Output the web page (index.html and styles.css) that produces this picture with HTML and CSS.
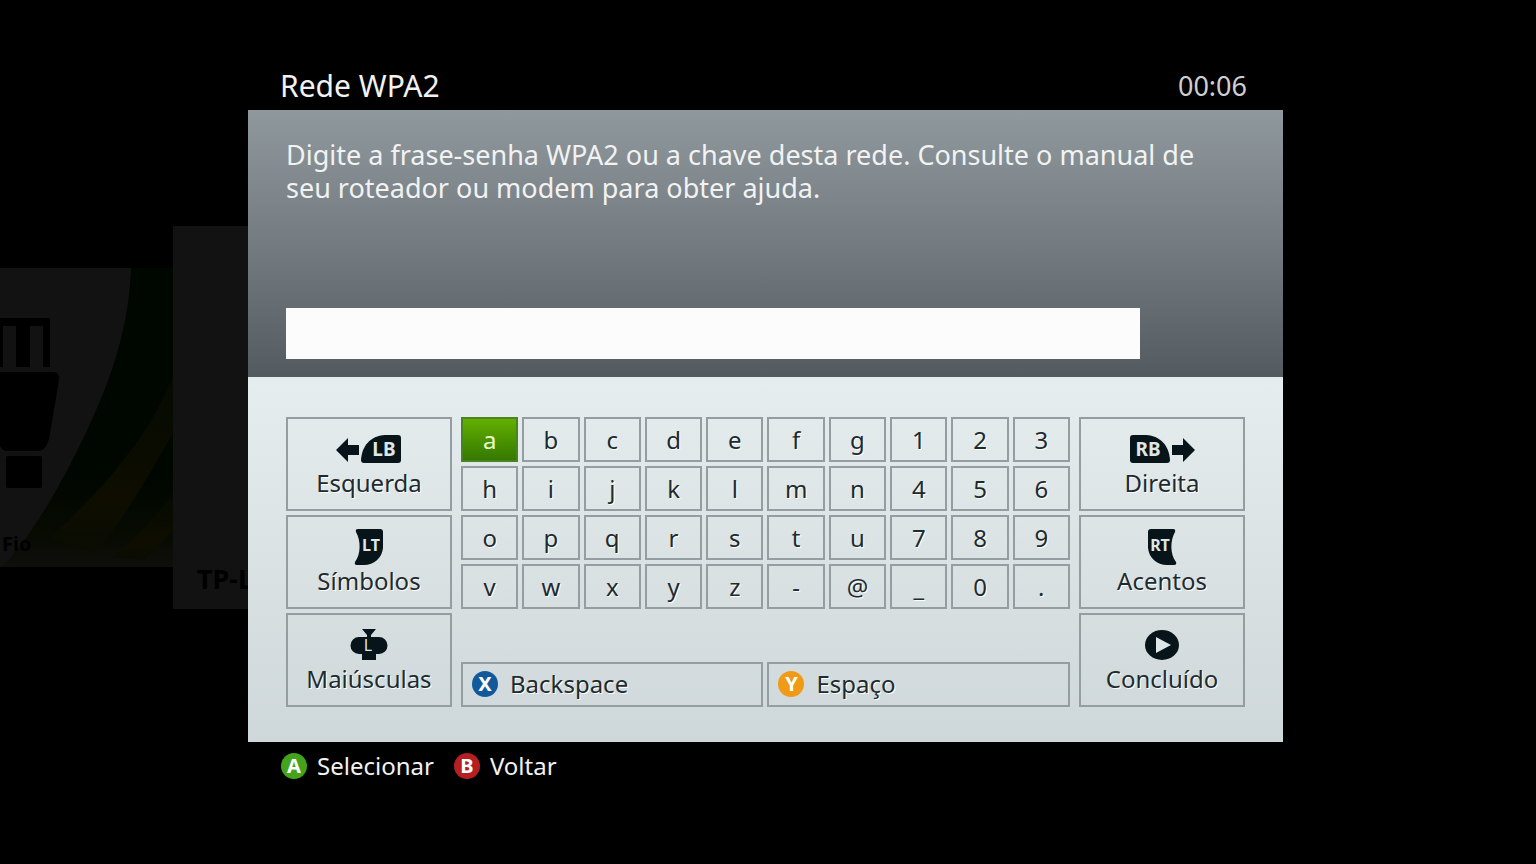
FILE: index.html
```html
<!DOCTYPE html>
<html lang="pt-BR">
<head>
    <meta charset="UTF-8">
    <meta name="viewport" content="width=device-width, initial-scale=1.0">
    <title>Rede WPA2</title>
    <link rel="stylesheet" href="styles.css">
</head>
<body>
    <!-- dimmed network list behind the dialog -->
    <div class="backdrop">
        <div class="tile tile-wired">
            <svg class="tile-art" viewBox="0 0 173 299" preserveAspectRatio="none" aria-hidden="true">
                <defs>
                    <linearGradient id="swoosh" x1="0" y1="0" x2="0" y2="1">
                        <stop offset="0" stop-color="#000600"/>
                        <stop offset="0.7" stop-color="#000700"/>
                        <stop offset="0.9" stop-color="#070b02"/>
                        <stop offset="1" stop-color="#0f0f0b"/>
                    </linearGradient>
                    <linearGradient id="streak" x1="0" y1="0" x2="0" y2="1">
                        <stop offset="0" stop-color="#050a00"/>
                        <stop offset="0.7" stop-color="#0e0d00"/>
                        <stop offset="1" stop-color="#0a0c02"/>
                    </linearGradient>
                </defs>
                <path fill="url(#swoosh)" d="M131 0H173V299H2C30 270 60 220 88 160C114 105 129 55 131 0Z"/>
                <path fill="url(#streak)" d="M173 108C150 165 110 215 50 270L95 285C125 250 150 205 173 165Z"/>
                <path fill="url(#streak)" d="M173 226C155 250 135 270 112 290L145 292L173 262Z"/>
                <path fill="#000" d="M0 50H50V99H43V58H30V99H16V58H3V99H0Z"/>
                <path fill="#000" d="M0 104H53Q60 104 59 112L49 171Q46 183 38 183H8Q2 183 0 178Z"/>
                <rect fill="#000" x="6" y="188" width="36" height="32" rx="2"/>
            </svg>
            <span class="tile-name">Fio</span>
        </div>
        <div class="tile tile-router">
            <span class="tile-name">TP-L</span>
        </div>
    </div>

    <main class="screen">
        <header class="title-bar">
            <h1>Rede WPA2</h1>
            <span class="counter">00:06</span>
        </header>

        <div class="dialog">
            <div class="prompt">
                <label for="passphrase">Digite a frase-senha WPA2 ou a chave desta rede. Consulte o manual de seu roteador ou modem para obter ajuda.</label>
                <input type="text" id="passphrase" autocomplete="off">
            </div>

            <div class="keyboard">
                <div class="side">
                    <button type="button" class="key side-key">
                        <svg width="66" height="36" viewBox="0 0 66 30" aria-hidden="true">
                            <path fill="#071419" d="M0 16L12 4V11H23V21H12V28Z"/>
                            <path fill="#071419" d="M25 26C26 12 34 2 49 1H62Q65 1 65 4V26Q65 29 62 29H28Q25 29 25 26Z"/>
                            <text x="48" y="22" class="icon-text">LB</text>
                        </svg>
                        <span>Esquerda</span>
                    </button>
                    <button type="button" class="key side-key">
                        <svg width="30" height="36" viewBox="0 0 30 36" aria-hidden="true">
                            <path fill="#071419" d="M4 0H26Q29 0 29 3V19C28 29 20 36 10 36H3Q0 36 1 33C7 25 7 12 2 3Q1 0 4 0Z"/>
                            <text x="17" y="22" class="icon-text small">LT</text>
                        </svg>
                        <span>Símbolos</span>
                    </button>
                    <button type="button" class="key side-key">
                        <svg width="38" height="36" viewBox="0 0 38 32" aria-hidden="true">
                            <path fill="#071419" d="M12 0H26L21 6V8H29A8 8 0 0 1 29 25H26V31H12V25H9A8 8 0 0 1 9 8H17V6Z"/>
                            <text x="18" y="22" class="icon-text small thin">L</text>
                        </svg>
                        <span>Maiúsculas</span>
                    </button>
                </div>

                <div class="keys">
                    <button type="button" class="key selected">a</button>
                    <button type="button" class="key">b</button>
                    <button type="button" class="key">c</button>
                    <button type="button" class="key">d</button>
                    <button type="button" class="key">e</button>
                    <button type="button" class="key">f</button>
                    <button type="button" class="key">g</button>
                    <button type="button" class="key">1</button>
                    <button type="button" class="key">2</button>
                    <button type="button" class="key">3</button>

                    <button type="button" class="key">h</button>
                    <button type="button" class="key">i</button>
                    <button type="button" class="key">j</button>
                    <button type="button" class="key">k</button>
                    <button type="button" class="key">l</button>
                    <button type="button" class="key">m</button>
                    <button type="button" class="key">n</button>
                    <button type="button" class="key">4</button>
                    <button type="button" class="key">5</button>
                    <button type="button" class="key">6</button>

                    <button type="button" class="key">o</button>
                    <button type="button" class="key">p</button>
                    <button type="button" class="key">q</button>
                    <button type="button" class="key">r</button>
                    <button type="button" class="key">s</button>
                    <button type="button" class="key">t</button>
                    <button type="button" class="key">u</button>
                    <button type="button" class="key">7</button>
                    <button type="button" class="key">8</button>
                    <button type="button" class="key">9</button>

                    <button type="button" class="key">v</button>
                    <button type="button" class="key">w</button>
                    <button type="button" class="key">x</button>
                    <button type="button" class="key">y</button>
                    <button type="button" class="key">z</button>
                    <button type="button" class="key">-</button>
                    <button type="button" class="key">@</button>
                    <button type="button" class="key">_</button>
                    <button type="button" class="key">0</button>
                    <button type="button" class="key">.</button>

                    <button type="button" class="key wide-key"><span class="pad pad-x">X</span>Backspace</button>
                    <button type="button" class="key wide-key"><span class="pad pad-y">Y</span>Espaço</button>
                </div>

                <div class="side">
                    <button type="button" class="key side-key">
                        <svg width="66" height="36" viewBox="0 0 66 30" aria-hidden="true">
                            <path fill="#071419" d="M66 16L54 4V11H43V21H54V28Z"/>
                            <path fill="#071419" d="M41 26C40 12 32 2 17 1H4Q1 1 1 4V26Q1 29 4 29H38Q41 29 41 26Z"/>
                            <text x="19" y="22" class="icon-text">RB</text>
                        </svg>
                        <span>Direita</span>
                    </button>
                    <button type="button" class="key side-key">
                        <svg width="30" height="36" viewBox="0 0 30 36" aria-hidden="true">
                            <path fill="#071419" d="M26 0H4Q1 0 1 3V19C2 29 10 36 20 36H27Q30 36 29 33C23 25 23 12 28 3Q29 0 26 0Z"/>
                            <text x="13" y="22" class="icon-text small">RT</text>
                        </svg>
                        <span>Acentos</span>
                    </button>
                    <button type="button" class="key side-key">
                        <svg width="34" height="36" viewBox="0 0 34 30" aria-hidden="true">
                            <ellipse fill="#071419" cx="17" cy="15" rx="17" ry="15"/>
                            <path fill="#dfe6e8" d="M11 7L26 15L11 23Z"/>
                        </svg>
                        <span>Concluído</span>
                    </button>
                </div>
            </div>
        </div>

        <footer class="hints">
            <button type="button" class="hint"><span class="pad pad-a">A</span>Selecionar</button>
            <button type="button" class="hint"><span class="pad pad-b">B</span>Voltar</button>
        </footer>
    </main>

    <script>
        const field = document.getElementById('passphrase');
        const keys = document.querySelectorAll('.keys .key:not(.wide-key)');

        keys.forEach(key => {
            key.addEventListener('click', function() {
                document.querySelector('.key.selected').classList.remove('selected');
                key.classList.add('selected');
                field.value += key.textContent;
            });
        });

        document.querySelector('.pad-x').parentElement.addEventListener('click', function() {
            field.value = field.value.slice(0, -1);
        });

        document.querySelector('.pad-y').parentElement.addEventListener('click', function() {
            field.value += ' ';
        });
    </script>
</body>
</html>
```
FILE: styles.css
```css
:root {
    --ink: #1d2b30;
    --key-border: #949da0;
    --tile: #121212;
}

* {
    margin: 0;
    padding: 0;
    box-sizing: border-box;
}

body {
    position: relative;
    min-height: 100vh;
    padding: 62px 5px 0 0;
    background-color: #000;
    color: #f2f2f2;
    font-family: 'Noto Sans', 'Open Sans', sans-serif;
    font-size: 24px;
    overflow-x: hidden;
}

button {
    font: inherit;
    color: inherit;
    background: none;
    border: none;
    cursor: pointer;
}

/* network tiles */
.backdrop {
    position: absolute;
    top: 226px;
    left: 0;
    display: flex;
    align-items: center;
}

.tile {
    position: relative;
    display: flex;
    align-items: flex-end;
    background-color: var(--tile);
    color: #000;
    font-weight: 700;
}

.tile-wired {
    width: 173px;
    height: 299px;
    padding: 8px 2px;
    font-size: 20px;
    line-height: 30px;
}

.tile-router {
    width: 173px;
    height: 383px;
    padding: 14px 24px;
    font-size: 27px;
    line-height: 32px;
}

.tile-art {
    position: absolute;
    top: 0;
    left: 0;
    width: 100%;
    height: 100%;
}

.tile-name {
    position: relative;
}

/* dialog */
.screen {
    position: relative;
    max-width: 1035px;
    margin: 0 auto;
}

.title-bar {
    display: flex;
    justify-content: space-between;
    align-items: center;
    height: 48px;
    padding: 0 36px 2px 32px;
}

.title-bar h1 {
    font-size: 30px;
    font-weight: 400;
}

.counter {
    font-size: 27px;
    color: #cfcfcf;
}

.prompt {
    display: flex;
    flex-direction: column;
    justify-content: space-between;
    align-items: flex-start;
    min-height: 267px;
    padding: 28px 38px 18px;
    background: linear-gradient(#8f989c, #747c81 50%, #535a60);
}

.prompt label {
    max-width: 930px;
    font-size: 27px;
    line-height: 33px;
}

.prompt input {
    width: 89%;
    height: 51px;
    padding: 0 12px;
    border: none;
    background-color: #fcfcfc;
    color: var(--ink);
    font: inherit;
}

.keyboard {
    display: grid;
    grid-template-columns: 166px 1fr 166px;
    gap: 9px;
    padding: 40px 38px 35px;
    background: linear-gradient(#e6edee, #ced7d9);
    color: var(--ink);
}

.side {
    display: grid;
    grid-template-rows: repeat(3, 1fr);
    gap: 4px;
}

.keys {
    display: grid;
    grid-template-columns: repeat(10, 1fr);
    grid-template-rows: repeat(6, 45px);
    gap: 4px;
}

.key {
    border: 2px solid var(--key-border);
    line-height: 32px;
    text-shadow: 1px 1px 0 #fff;
}

.key.selected {
    background: linear-gradient(#62b000, #357800);
    border-color: #4a8420;
    color: #eaffc8;
    text-shadow: none;
}

.side-key {
    display: flex;
    flex-direction: column;
    align-items: center;
    justify-content: flex-end;
    padding-bottom: 10px;
}

.side-key svg {
    flex: none;
}

.wide-key {
    grid-row: 6;
    grid-column: span 5;
    display: flex;
    align-items: center;
    gap: 12px;
    padding: 0 9px 2px;
}

.icon-text {
    font-size: 19px;
    font-weight: 700;
    fill: #dfe6e8;
    text-anchor: middle;
    text-shadow: none;
}

.icon-text.small {
    font-size: 16px;
}

.icon-text.thin {
    font-weight: 400;
}

/* gamepad buttons */
.pad {
    display: flex;
    align-items: center;
    justify-content: center;
    width: 26px;
    height: 26px;
    border-radius: 50%;
    color: #fff;
    font-size: 20px;
    font-weight: 700;
    line-height: 26px;
    text-shadow: none;
}

.pad-x { background-color: #12599b; }
.pad-y { background-color: #f09a16; }
.pad-a { background-color: #43a31c; }
.pad-b { background-color: #b51f24; }

.hints {
    display: flex;
    gap: 20px;
    padding: 8px 33px;
}

.hint {
    display: flex;
    align-items: center;
    gap: 10px;
    line-height: 32px;
}

@media (max-width: 900px) {
    .backdrop {
        display: none;
    }

    .keyboard {
        grid-template-columns: 1fr;
    }
}
```
